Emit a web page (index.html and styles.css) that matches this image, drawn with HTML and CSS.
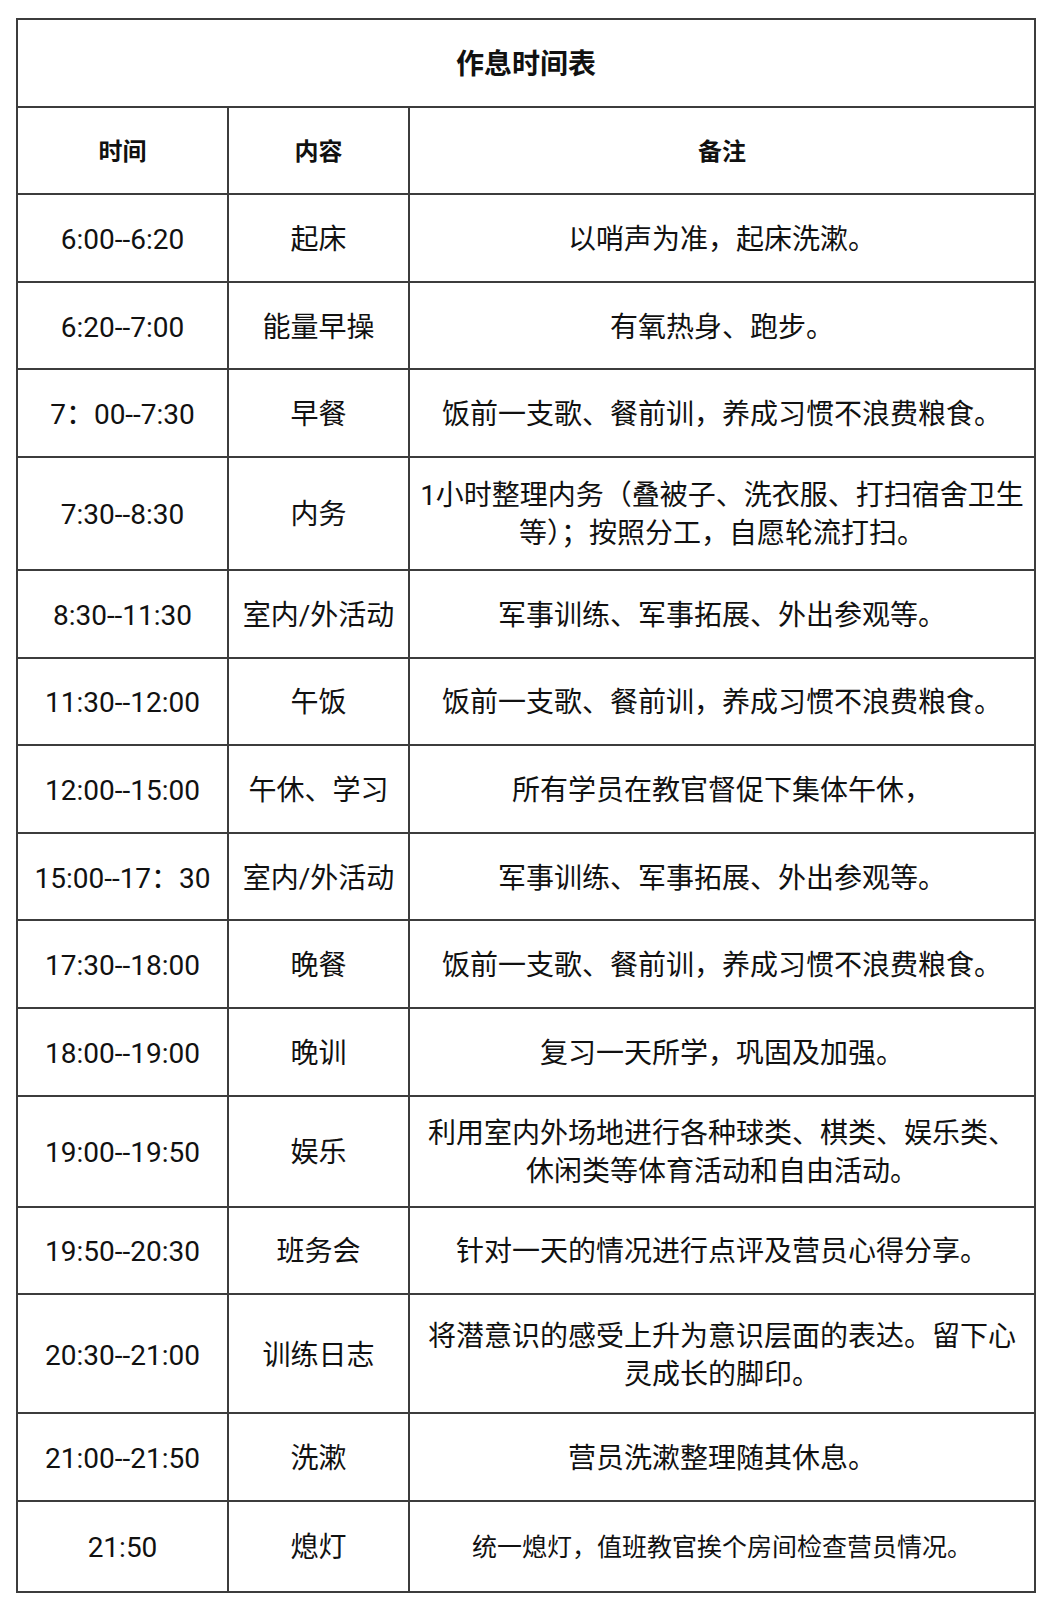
FILE: index.html
```html
<!DOCTYPE html>
<html lang="zh-CN">
<head>
<meta charset="utf-8">
<title>作息时间表</title>
<link rel="stylesheet" href="styles.css">
</head>
<body>
<table class="schedule">
  <colgroup>
    <col class="c-time">
    <col class="c-item">
    <col class="c-note">
  </colgroup>
  <tr class="row title-row"><td colspan="3">作息时间表</td></tr>
  <tr class="row head-row"><td>时间</td><td>内容</td><td>备注</td></tr>
  <tr class="row"><td>6:00--6:20</td><td>起床</td><td>以哨声为准，起床洗漱。</td></tr>
  <tr class="row"><td>6:20--7:00</td><td>能量早操</td><td>有氧热身、跑步。</td></tr>
  <tr class="row"><td>7：00--7:30</td><td>早餐</td><td>饭前一支歌、餐前训，养成习惯不浪费粮食。</td></tr>
  <tr class="row tall-a"><td>7:30--8:30</td><td>内务</td><td>1小时整理内务（叠被子、洗衣服、打扫宿舍卫生等）；按照分工，自愿轮流打扫。</td></tr>
  <tr class="row"><td>8:30--11:30</td><td>室内/外活动</td><td>军事训练、军事拓展、外出参观等。</td></tr>
  <tr class="row"><td>11:30--12:00</td><td>午饭</td><td>饭前一支歌、餐前训，养成习惯不浪费粮食。</td></tr>
  <tr class="row"><td>12:00--15:00</td><td>午休、学习</td><td>所有学员在教官督促下集体午休，</td></tr>
  <tr class="row"><td>15:00--17：30</td><td>室内/外活动</td><td>军事训练、军事拓展、外出参观等。</td></tr>
  <tr class="row"><td>17:30--18:00</td><td>晚餐</td><td>饭前一支歌、餐前训，养成习惯不浪费粮食。</td></tr>
  <tr class="row"><td>18:00--19:00</td><td>晚训</td><td>复习一天所学，巩固及加强。</td></tr>
  <tr class="row tall-b"><td>19:00--19:50</td><td>娱乐</td><td>利用室内外场地进行各种球类、棋类、娱乐类、休闲类等体育活动和自由活动。</td></tr>
  <tr class="row"><td>19:50--20:30</td><td>班务会</td><td>针对一天的情况进行点评及营员心得分享。</td></tr>
  <tr class="row tall-c"><td>20:30--21:00</td><td>训练日志</td><td>将潜意识的感受上升为意识层面的表达。留下心灵成长的脚印。</td></tr>
  <tr class="row"><td>21:00--21:50</td><td>洗漱</td><td>营员洗漱整理随其休息。</td></tr>
  <tr class="row last-row"><td>21:50</td><td>熄灯</td><td class="small">统一熄灯，值班教官挨个房间检查营员情况。</td></tr>
</table>
</body>
</html>
```

FILE: styles.css
```css
html, body {
  background: #ffffff;
}
body {
  margin: 18px 0 0 16px;
  font-family: Roboto, "Noto Sans CJK SC", sans-serif;
  color: #111111;
}
.schedule {
  border-collapse: collapse;
  table-layout: fixed;
  width: 1018px;
}
.c-time { width: 211px; }
.c-item { width: 181px; }
.c-note { width: 626px; }
.schedule td {
  border: 2px solid #3c3c3c;
  padding: 4px 8px 0;
  text-align: center;
  vertical-align: middle;
  font-size: 28px;
  line-height: 38px;
  font-weight: 400;
}
.row { height: 87.6px; }
.tall-a { height: 113px; }
.tall-b { height: 111px; }
.tall-c { height: 119px; }
.last-row { height: 91px; }
.title-row td {
  font-size: 28px;
  font-weight: 700;
}
.head-row td {
  font-size: 24px;
  font-weight: 700;
}
.schedule td.small {
  font-size: 25px;
}
```
